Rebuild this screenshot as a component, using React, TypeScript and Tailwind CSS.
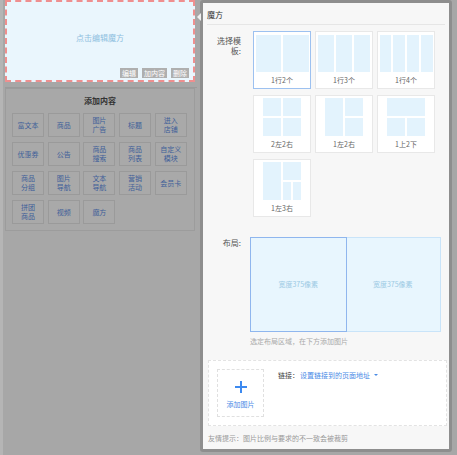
import React from "react";

const font = { fontFamily: '"Noto Sans CJK SC", "Noto Sans", sans-serif' };

const items = [
  ["富文本"],
  ["商品"],
  ["图片", "广告"],
  ["标题"],
  ["进入", "店铺"],
  ["优惠券"],
  ["公告"],
  ["商品", "搜索"],
  ["商品", "列表"],
  ["自定义", "模块"],
  ["商品", "分组"],
  ["图片", "导航"],
  ["文本", "导航"],
  ["营销", "活动"],
  ["会员卡"],
  ["拼团", "商品"],
  ["视频"],
  ["魔方"],
];

const C = "bg-[#e3f3fd]";

function Preview({ kind }: { kind: string }) {
  if (kind === "r2" || kind === "r3" || kind === "r4") {
    const n = kind === "r2" ? 2 : kind === "r3" ? 3 : 4;
    return (
      <div className="flex gap-[2px] w-[53px] h-[37px]">
        {Array.from({ length: n }).map((_, i) => (
          <div key={i} className={`flex-1 ${C}`} />
        ))}
      </div>
    );
  }
  if (kind === "22") {
    return (
      <div className="grid grid-cols-2 grid-rows-2 gap-[2px] w-[38px] h-[38px]">
        <div className={C} />
        <div className={C} />
        <div className={C} />
        <div className={C} />
      </div>
    );
  }
  if (kind === "12") {
    return (
      <div className="flex gap-[2px] w-[38px] h-[38px]">
        <div className={`flex-1 ${C}`} />
        <div className="flex-1 flex flex-col gap-[2px]">
          <div className={`flex-1 ${C}`} />
          <div className={`flex-1 ${C}`} />
        </div>
      </div>
    );
  }
  if (kind === "u2") {
    return (
      <div className="flex flex-col gap-[2px] w-[38px] h-[38px]">
        <div className={`flex-1 ${C}`} />
        <div className="flex-1 flex gap-[2px]">
          <div className={`flex-1 ${C}`} />
          <div className={`flex-1 ${C}`} />
        </div>
      </div>
    );
  }
  return (
    <div className="flex gap-[2px] w-[38px] h-[38px]">
      <div className={`flex-1 ${C}`} />
      <div className="flex-1 flex flex-col gap-[2px]">
        <div className={`flex-1 ${C}`} />
        <div className="flex-1 flex gap-[2px]">
          <div className={`flex-1 ${C}`} />
          <div className={`flex-1 ${C}`} />
        </div>
      </div>
    </div>
  );
}

const tiles = [
  { k: "r2", t: "1行2个", sel: true },
  { k: "r3", t: "1行3个" },
  { k: "r4", t: "1行4个" },
  { k: "22", t: "2左2右" },
  { k: "12", t: "1左2右" },
  { k: "u2", t: "1上2下" },
  { k: "13", t: "1左3右" },
];

export default function App() {
  return (
    <div style={font} className="w-[457px] h-[455px] bg-[#a7a7a7] flex overflow-hidden">
      {/* left */}
      <div className="w-[200px] flex flex-col border-l-[3px] border-l-[#b5b5b5]">
        <div className="ml-[2px] w-[190px] h-[82px] border-2 border-dashed border-[#ef8f8f] bg-[#eaf6fd] flex flex-col">
          <div className="flex-1 flex items-center justify-center text-[8px] text-[#8fc0e0] pt-[6px]">
            点击编辑魔方
          </div>
          <div className="flex justify-end gap-[4px] pr-[4px] pb-[2px]">
            <span className="bg-[#afafaf] text-white text-[7px] leading-[10px] px-[2px]">编辑</span>
            <span className="bg-[#afafaf] text-white text-[7px] leading-[10px] px-[2px]">加内容</span>
            <span className="bg-[#afafaf] text-white text-[7px] leading-[10px] px-[2px]">删除</span>
          </div>
        </div>
        <div className="h-[6px] w-[192px] ml-[2px] border-b border-[#9a9a9a]" />
        <div className="ml-[2px] w-[190px] border border-[#9c9c9c] bg-[#a8a8a8] pb-[6px]">
          <div className="text-center text-[8px] font-bold text-[#333] mt-[7px] leading-[10px]">添加内容</div>
          <div className="grid grid-cols-[repeat(5,32px)] gap-x-[3.7px] gap-y-[5px] pl-[6px] mt-[7px]">
            {items.map((lines, i) => (
              <div
                key={i}
                className="h-[24px] border border-[#9a9a9a] bg-[#a9a9a9] flex flex-col items-center justify-center text-[7px] leading-[9px] text-[#3f5f99]"
              >
                {lines.map((l, j) => (
                  <span key={j}>{l}</span>
                ))}
              </div>
            ))}
          </div>
        </div>
      </div>

      {/* right panel */}
      <div className="relative w-[252px] h-[452px] border-[3px] border-[#8e8e8e] rounded-[3px] bg-[#f7f7f7] flex flex-col">
        <div className="absolute left-[-6px] top-[10px] w-0 h-0 border-y-[4px] border-y-transparent border-r-[4px] border-r-[#f0f0f0]" />
        <div className="mx-[4px] h-[22px] border-b border-[#e6e6e6] flex items-center text-[8px] text-[#333] pt-[2px]">
          魔方
        </div>
        <div className="flex mt-[6px]">
          <div className="w-[42px] pr-[4px] text-right text-[8px] leading-[10px] text-[#555] pt-[5px]">
            选择模
            <br />
            板:
          </div>
          <div className="ml-[8px] grid grid-cols-[repeat(3,58px)] gap-x-[4px] gap-y-[6px]">
            {tiles.map((t, i) => (
              <div
                key={i}
                className={`h-[58px] bg-white border ${t.sel ? "border-[#9dc1f0]" : "border-[#e8e8e8]"} flex flex-col items-center pt-[2px]`}
              >
                <div className="h-[38px] flex items-center">
                  <Preview kind={t.k} />
                </div>
                <div className="flex-1 flex items-center text-[7px] text-[#666]">{t.t}</div>
              </div>
            ))}
          </div>
        </div>
        <div className="flex mt-[20px]">
          <div className="w-[42px] pr-[4px] text-right text-[8px] leading-[10px] text-[#555] pt-[1px]">布局:</div>
          <div className="ml-[5px] flex flex-col">
            <div className="flex w-[191px] h-[95px] border border-[#c9e4f9] bg-[#e8f6fe]">
              <div className="flex-1 border border-[#8fb6ee] -m-px flex items-center justify-center text-[7px] text-[#9ccae4]">
                宽度375像素
              </div>
              <div className="flex-1 flex items-center justify-center text-[7px] text-[#9ccae4]">宽度375像素</div>
            </div>
            <div className="mt-[4px] text-[7px] leading-[10px] text-[#aaa]">选定布局区域，在下方添加图片</div>
          </div>
        </div>
        <div className="mx-[5px] mt-[14px] h-[66px] w-[239px] bg-white border border-dashed border-[#e3e3e3] flex pl-[8px] pt-[8px]">
          <div className="w-[47px] h-[48px] border border-dashed border-[#e0e0e0] flex flex-col items-center">
            <svg width="12" height="12" viewBox="0 0 12 12" className="mt-[11px]">
              <path d="M6 0v12M0 6h12" stroke="#3d8af0" strokeWidth="2" />
            </svg>
            <span className="text-[7px] leading-[10px] text-[#4a8be6] mt-[6px]">添加图片</span>
          </div>
          <div className="ml-[14px] mt-[1px] flex items-start text-[7px] leading-[10px]">
            <span className="text-[#444]">链接：</span>
            <span className="text-[#4a8be6] ml-[1px]">设置链接到的页面地址</span>
            <span className="ml-[4px] mt-[4px] w-0 h-0 border-x-[2px] border-x-transparent border-t-[2px] border-t-[#4a8be6]" />
          </div>
        </div>
        <div className="mx-[5px] mt-[7px] text-[7px] leading-[10px] text-[#999]">友情提示：图片比例与要求的不一致会被裁剪</div>
      </div>
    </div>
  );
}
